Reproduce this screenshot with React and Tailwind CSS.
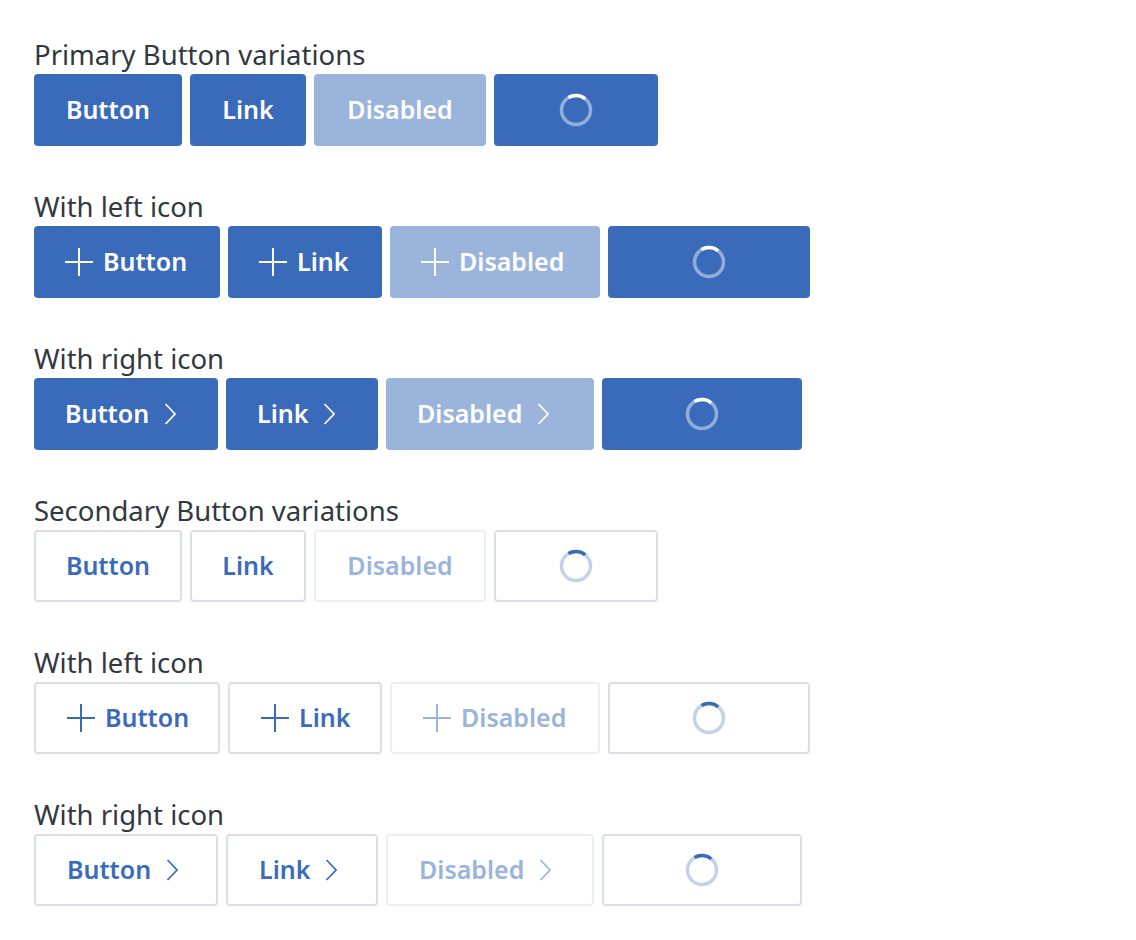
import React from 'react';

const FONT = { fontFamily: '"Noto Sans", "Open Sans", sans-serif' };

const PlusIcon = () => (
  <svg width="28" height="28" viewBox="0 0 28 28" fill="none" stroke="currentColor" strokeWidth="2">
    <path d="M14 0v28M0 14h28" />
  </svg>
);

const ChevronIcon = () => (
  <svg width="12" height="22" viewBox="0 0 12 22" fill="none" stroke="currentColor" strokeWidth="1.7">
    <path d="M1.5 1l9.5 10-9.5 10" />
  </svg>
);

const Spinner = ({ secondary }) => (
  <svg width="34" height="34" viewBox="0 0 34 34" fill="none" strokeWidth="3.5">
    <circle cx="17" cy="17" r="14.5" stroke={secondary ? '#c3d2ea' : 'rgba(255,255,255,0.45)'} />
    <path d="M9.5 4.6A14.5 14.5 0 0 1 26.2 5.8" stroke={secondary ? '#3a6bba' : '#ffffff'} />
  </svg>
);

const Btn = ({ variant, state, icon, width, children }) => {
  const primary = variant === 'primary';
  let cls = 'h-[72px] rounded-[4px] flex items-center text-[25px] font-semibold shrink-0 ';
  cls += state === 'loading' || icon === 'none' ? 'justify-center ' : 'justify-start pl-[31px] ';
  if (primary) {
    cls += state === 'disabled' ? 'bg-[#9bb4dc] text-white' : 'bg-[#3a6bba] text-white';
  } else {
    cls += state === 'disabled'
      ? 'bg-white border-2 border-[#eeeff3] text-[#9bb4dc]'
      : 'bg-white border-2 border-[#dcdfe6] text-[#3a6bba] shadow-[0_1px_2px_rgba(0,0,0,0.04)]';
  }
  return (
    <button className={cls} style={{ width }}>
      {state === 'loading' ? (
        <Spinner secondary={!primary} />
      ) : (
        <>
          {icon === 'left' && <span className="mr-[10px] flex"><PlusIcon /></span>}
          <span className="leading-none pb-[2px]">{children}</span>
          {icon === 'right' && <span className="ml-[15px] flex"><ChevronIcon /></span>}
        </>
      )}
    </button>
  );
};

const widths = {
  none: [148, 116, 172, 164],
  left: [186, 154, 210, 202],
  right: [184, 152, 208, 200],
};

const Section = ({ title, variant, icon, first }) => {
  const w = widths[icon];
  return (
    <div className={first ? '' : 'mt-[42px]'}>
      <div className="text-[27.5px] leading-[38px] text-[#333840]">{title}</div>
      <div className="flex gap-[8px]">
        <Btn variant={variant} icon={icon} width={w[0]}>Button</Btn>
        <Btn variant={variant} icon={icon} width={w[1]}>Link</Btn>
        <Btn variant={variant} icon={icon} width={w[2]} state="disabled">Disabled</Btn>
        <Btn variant={variant} icon={icon} width={w[3]} state="loading" />
      </div>
    </div>
  );
};

export default function App() {
  return (
    <div className="min-h-[940px] bg-white pl-[34px] pt-[36px]" style={FONT}>
      <Section first title="Primary Button variations" variant="primary" icon="none" />
      <Section title="With left icon" variant="primary" icon="left" />
      <Section title="With right icon" variant="primary" icon="right" />
      <Section title="Secondary Button variations" variant="secondary" icon="none" />
      <Section title="With left icon" variant="secondary" icon="left" />
      <Section title="With right icon" variant="secondary" icon="right" />
    </div>
  );
}
